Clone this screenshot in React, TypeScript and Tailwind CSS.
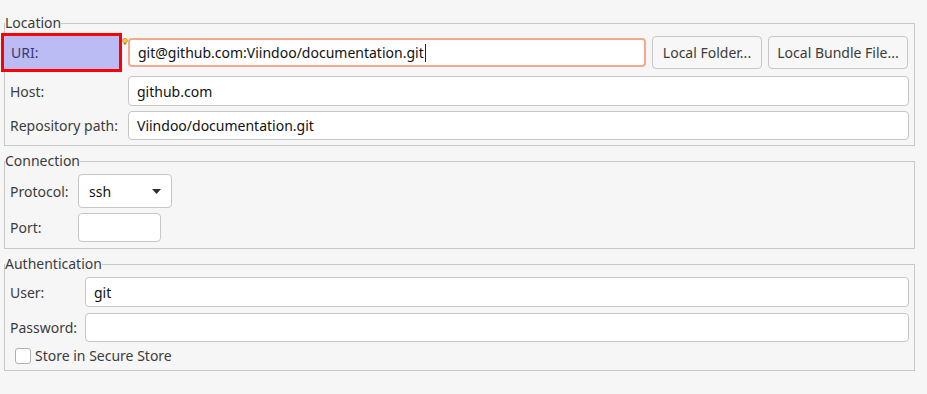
import React from 'react';

const font = { fontFamily: '"Noto Sans", "DejaVu Sans", sans-serif' };

const Field: React.FC<{ value?: string; className?: string; caret?: boolean }> = ({ value, className, caret }) => (
  <div
    className={`flex items-center bg-white border border-[#c6c6c6] rounded-[4px] pl-[8px] text-[14px] text-[#111] ${className ?? ''}`}
  >
    <span>{value}</span>
    {caret && <span className="inline-block w-[1px] h-[18px] bg-[#222] ml-[1px]" />}
  </div>
);

const Group: React.FC<{ title: string; className?: string; children: React.ReactNode }> = ({ title, className, children }) => (
  <fieldset className={`border border-[#c8c8c8] mx-0 px-[5px] ${className ?? ''}`}>
    <legend className="px-0 ml-[-5px] h-[20px] leading-[20px] text-[14px] text-[#3c3c3c]">{title}</legend>
    {children}
  </fieldset>
);

export default function App() {
  return (
    <div style={font} className="w-[927px] h-[394px] bg-[#f6f6f6] pl-[4px] pr-[12px] pt-[13px] text-[#3c3c3c] overflow-hidden">
      <Group title="Location" className="pb-[5px]">
        <div className="flex items-center h-[39px] relative">
          <div className="w-[121px] h-[39px] -ml-[9px] border-[3px] border-[#ff0000] bg-[#bcbcf5] flex items-center pl-[7px] text-[14px] text-[#383870] shrink-0">
            URI:
          </div>
          <svg width="6" height="7" viewBox="0 0 6 7" className="absolute left-[112px] top-[5px]">
            <path d="M3 0.5 C1.3 0.5 0.5 1.6 0.5 2.7 C0.5 3.6 1.2 4.1 1.6 4.6 L4.4 4.6 C4.8 4.1 5.5 3.6 5.5 2.7 C5.5 1.6 4.7 0.5 3 0.5 Z" fill="#f3c64a" stroke="#d08a1a" strokeWidth="0.8" />
            <rect x="1.8" y="5" width="2.4" height="1.5" fill="#b07a2a" />
          </svg>
          <Field
            value="git@github.com:Viindoo/documentation.git"
            caret
            className="ml-[6px] w-[518px] h-[29px] !border-[2px] !border-[#f4a98e]"
          />
          <button className="ml-[6px] w-[110px] h-[33px] border border-[#c6c6c6] rounded-[4px] bg-[#f7f7f7] text-[14px] text-[#3c3c3c]">
            Local Folder...
          </button>
          <button className="ml-[6px] w-[140px] h-[33px] border border-[#c6c6c6] rounded-[4px] bg-[#f7f7f7] text-[14px] text-[#3c3c3c]">
            Local Bundle File...
          </button>
        </div>
        <div className="flex items-center mt-[4px]">
          <span className="w-[118px] text-[14px] shrink-0">Host:</span>
          <Field value="github.com" className="flex-1 h-[30px]" />
        </div>
        <div className="flex items-center mt-[5px]">
          <span className="w-[118px] text-[14px] shrink-0 whitespace-nowrap">Repository path:</span>
          <Field value="Viindoo/documentation.git" className="flex-1 h-[29px]" />
        </div>
      </Group>

      <Group title="Connection" className="mt-[5px] pb-[6px]">
        <div className="flex items-center mt-[3px]">
          <span className="w-[68px] text-[14px] shrink-0">Protocol:</span>
          <div className="w-[94px] h-[34px] bg-white border border-[#c6c6c6] rounded-[4px] flex items-center justify-between pl-[10px] pr-[10px] text-[14px] text-[#111]">
            <span>ssh</span>
            <svg width="9" height="5" viewBox="0 0 9 5">
              <path d="M0 0 L9 0 L4.5 5 Z" fill="#2e2e2e" />
            </svg>
          </div>
        </div>
        <div className="flex items-center mt-[5px]">
          <span className="w-[68px] text-[14px] shrink-0">Port:</span>
          <Field className="w-[83px] h-[29px]" />
        </div>
      </Group>

      <Group title="Authentication" className="mt-[5px] pb-[6px]">
        <div className="flex items-center mt-[3px]">
          <span className="w-[75px] text-[14px] shrink-0">User:</span>
          <Field value="git" className="flex-1 h-[30px]" />
        </div>
        <div className="flex items-center mt-[6px]">
          <span className="w-[75px] text-[14px] shrink-0">Password:</span>
          <Field className="flex-1 h-[29px]" />
        </div>
        <div className="flex items-center mt-[6px] ml-[5px]">
          <span className="w-[16px] h-[16px] bg-white border border-[#b0b0b0] rounded-[3px] shrink-0" />
          <span className="ml-[4px] text-[14px] leading-[16px]">Store in Secure Store</span>
        </div>
      </Group>
    </div>
  );
}
